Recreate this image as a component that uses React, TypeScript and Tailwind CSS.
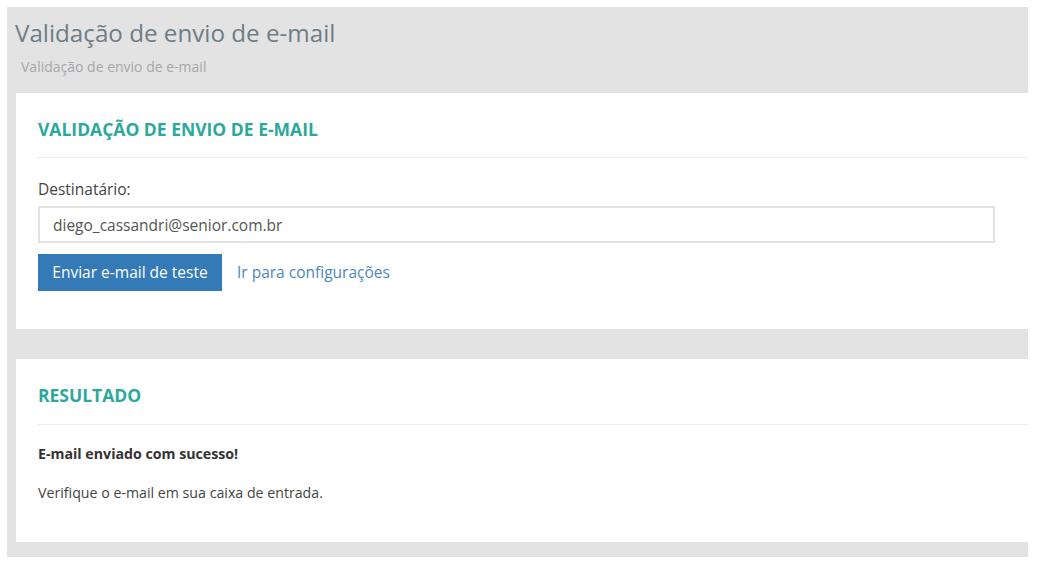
export default function App() {
  return (
    <div className="min-h-screen bg-white p-[7px] font-['Open_Sans',sans-serif] text-[#333]">
      <div className="w-[1021px] h-[550px] bg-[#e3e3e3] pl-[9px] flex flex-col">
        <div className="pt-[10px]">
          <h1 className="text-[24.2px] leading-[32px] text-[#6f7d87] -ml-[1px]">Validação de envio de e-mail</h1>
          <div className="mt-[10px] ml-[5px] text-[14px] leading-[16px] text-[#a3a8ab]">Validação de envio de e-mail</div>
        </div>

        <div className="mt-[18px] bg-white h-[236px] pl-[22px]">
          <h2 className="pt-[24px] text-[17.5px] leading-[24px] font-bold text-[#2ba89b]">VALIDAÇÃO DE ENVIO DE E-MAIL</h2>
          <div className="mt-[16px] border-t border-[#ececec]" />
          <div className="mt-[21px] text-[15.5px] leading-[20px] text-[#444]">Destinatário:</div>
          <input
            className="mt-[7px] block w-[957px] h-[37px] border-2 border-[#e2e2e2] px-[13px] text-[15.5px] text-[#555] outline-none"
            defaultValue="diego_cassandri@senior.com.br"
            readOnly
          />
          <div className="mt-[11px] flex items-center gap-[15px]">
            <button className="h-[37px] w-[184px] bg-[#337ab7] text-white text-[15.5px]">Enviar e-mail de teste</button>
            <a className="text-[15.5px] text-[#4d87c0]">Ir para configurações</a>
          </div>
        </div>

        <div className="mt-[30px] bg-white h-[183px] pl-[22px]">
          <h2 className="pt-[24px] text-[17.5px] leading-[24px] font-bold text-[#2ba89b]">RESULTADO</h2>
          <div className="mt-[17px] border-t border-[#ececec]" />
          <div className="mt-[20px] text-[14.2px] leading-[18px] font-bold text-[#333]">E-mail enviado com sucesso!</div>
          <div className="mt-[21px] text-[14.2px] leading-[18px] text-[#444]">Verifique o e-mail em sua caixa de entrada.</div>
        </div>
      </div>
    </div>
  );
}
